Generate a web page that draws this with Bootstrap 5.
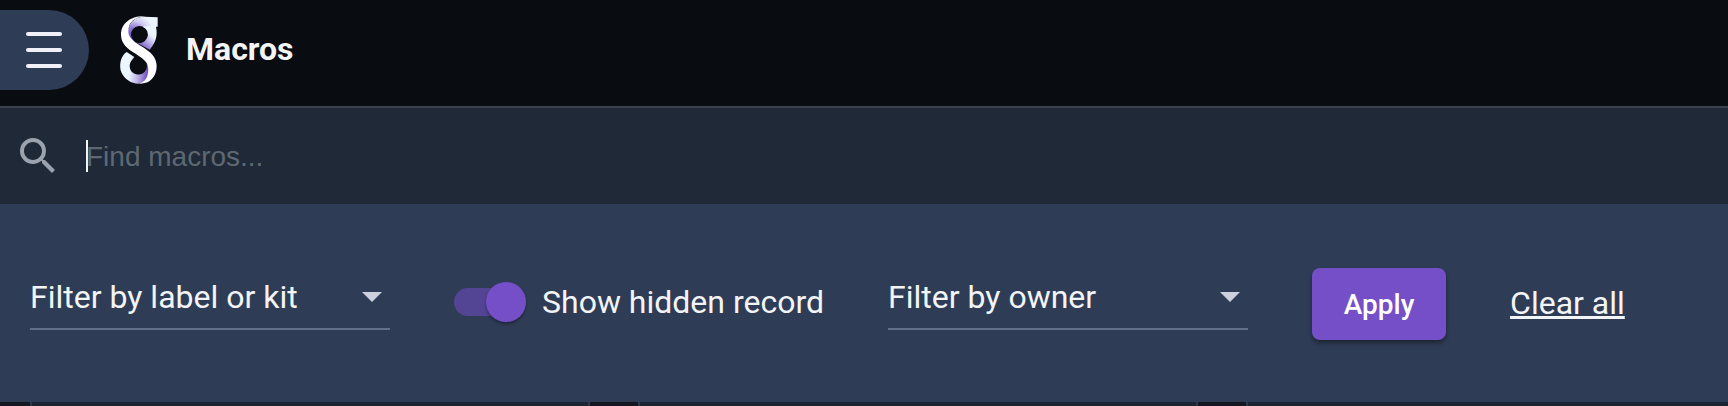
<!DOCTYPE html>
<html lang="en">
<head>
<meta charset="utf-8">
<meta name="viewport" content="width=device-width, initial-scale=1">
<title>Macros</title>
<link href="https://cdn.jsdelivr.net/npm/bootstrap@5.3.0/dist/css/bootstrap.min.css" rel="stylesheet">
<style>
  body { background: #141621; color: #f3f4f6; font-family: Roboto, sans-serif; font-size: 32px; line-height: 36px; }
  .topbar { background: #090c11; border-bottom: 2px solid #3b424c; padding: 10px 0 16px; }
  .menu-btn { width: 89px; height: 80px; padding: 0 0 0 26px; border: 0; border-radius: 0 40px 40px 0; background: #2f3c56; gap: 12px; }
  .menu-btn span { width: 36px; height: 4px; border-radius: 2px; background: #f0f1f7; }
  .logo { width: 60px; height: 80px; margin-left: 21px; }
  .page-title { font-size: 32px; line-height: 36px; font-weight: 700; margin-left: 16px; padding-bottom: 2px; }
  .searchbar { background: #1f2937; height: 96px; padding: 0 14px; gap: 24px; }
  .search-input { height: 32px; padding: 2px 0 0; border: 0; background: linear-gradient(#f3f4f6, #f3f4f6) no-repeat left / 2px 100%; color: #f3f4f6; outline: 0; font: 28px/30px "Liberation Sans", sans-serif; }
  .search-input::placeholder { color: #5e6872; opacity: 1; }
  .filters { background: #2f3c56; height: 198px; padding: 0 30px; gap: 64px; }
  .filter-select { width: 360px; height: 54px; padding: 0 0 10px; border: 0; border-bottom: 2px solid #636f8a; border-radius: 0; color: #f3f4f6; font-size: 32px; line-height: 36px;
    background: url("data:image/svg+xml,%3Csvg xmlns='http://www.w3.org/2000/svg' viewBox='0 0 20 10'%3E%3Cpath d='M0 0h20L10 10z' fill='%23cdd1de'/%3E%3C/svg%3E") no-repeat right 8px top 16px / 20px 10px; }
  .toggle { gap: 16px; padding-bottom: 2px; }
  .toggle-input { appearance: none; width: 72px; height: 28px; margin: 0; border-radius: 14px; background: #544494; display: flex; align-items: center; justify-content: flex-end; }
  .toggle-input::before { content: ""; flex: none; width: 40px; height: 40px; border-radius: 50%; background: #754fc8; box-shadow: 0 2px 3px rgba(0,0,0,.35); }
  .apply-btn { width: 134px; height: 72px; margin-top: 2px; padding: 8px 0 6px; border: 0; border-radius: 8px; background: #754fc8; color: #fff; font-size: 28px; font-weight: 500; box-shadow: 0 3px 4px rgba(0,0,0,.4); }
  .apply-btn:hover { background: #6a45bb; color: #fff; }
  .clear-link { color: #f3f4f6; }
  .results { height: 4px; padding-left: 30px; gap: 48px; }
  .macro-card { flex: 0 0 560px; background: #1a2433; border: solid #2c374e; border-width: 0 2px; }
</style>
</head>
<body>
<header class="topbar d-flex align-items-center">
  <button class="menu-btn d-flex flex-column justify-content-center" type="button" aria-label="Menu"><span></span><span></span><span></span></button>
  <svg class="logo" viewBox="0 6 180 240" aria-hidden="true">
    <defs>
      <radialGradient id="upper" gradientUnits="userSpaceOnUse" cx="66" cy="88" r="72">
        <stop offset="0" stop-color="#6f4fc0"/><stop offset=".4" stop-color="#8f78d2"/><stop offset=".7" stop-color="#cfcbf0"/><stop offset="1" stop-color="#eef7ff"/>
      </radialGradient>
      <linearGradient id="upperRight" gradientUnits="userSpaceOnUse" x1="96" y1="122" x2="128" y2="84">
        <stop offset="0" stop-color="#6f4fc0"/><stop offset=".5" stop-color="#b3a5e2"/><stop offset="1" stop-color="#ecf6ff"/>
      </linearGradient>
      <linearGradient id="lower" gradientUnits="userSpaceOnUse" x1="114" y1="190" x2="58" y2="184">
        <stop offset="0" stop-color="#6f4fc0"/><stop offset=".5" stop-color="#bcb0e6"/><stop offset="1" stop-color="#ecf6ff"/>
      </linearGradient>
    </defs>
    <path fill="url(#upper)" d="M54 98C46 56 66 26 104 26L143 28V56H138L120 72L105 60A25 25 0 1 0 72 99L76 112Z"/>
    <path fill="url(#upperRight)" d="M98 56L136 50C143 70 143 98 119 125L78 103A25 25 0 0 0 98 56Z"/>
    <path fill="url(#lower)" d="M50 132C30 145 27 175 34 193C45 218 72 231 94 226C119 221 125 180 110 167A26 26 0 1 1 66 156L73 147Z"/>
    <path fill="#fff" d="M108 25C76 21 33 37 33 80C33 136 117 138 115 184C114 210 105 222 88 227C119 228 140 207 140 174C140 118 57 113 55 72C54 45 70 27 108 25Z"/>
  </svg>
  <h1 class="page-title mb-0">Macros</h1>
</header>

<form class="searchbar d-flex align-items-center" role="search">
  <svg width="48" height="48" viewBox="0 0 24 24" fill="#9ca3af" aria-hidden="true"><path d="M15.5 14h-.79l-.28-.27A6.47 6.47 0 0 0 16 9.5 6.5 6.5 0 1 0 9.5 16c1.61 0 3.09-.59 4.23-1.57l.27.28v.79l5 4.99L20.49 19l-4.99-5zm-6 0C7.01 14 5 11.99 5 9.5S7.01 5 9.5 5 14 7.01 14 9.5 11.99 14 9.5 14z"/></svg>
  <input class="search-input flex-grow-1" type="text" placeholder="Find macros..." aria-label="Find macros">
</form>

<form class="filters d-flex align-items-center">
  <select class="filter-select form-select flex-shrink-0" aria-label="Filter by label or kit"><option>Filter by label or kit</option></select>
  <div class="toggle d-flex align-items-center flex-shrink-0">
    <input class="toggle-input" type="checkbox" role="switch" id="showHidden" checked>
    <label for="showHidden">Show hidden record</label>
  </div>
  <select class="filter-select form-select flex-shrink-0" aria-label="Filter by owner"><option>Filter by owner</option></select>
  <button class="apply-btn btn flex-shrink-0" type="button">Apply</button>
  <a class="clear-link text-nowrap" href="#">Clear all</a>
</form>

<main class="results d-flex overflow-hidden">
  <div class="macro-card"></div>
  <div class="macro-card"></div>
  <div class="macro-card"></div>
</main>
<script src="https://cdn.jsdelivr.net/npm/bootstrap@5.3.0/dist/js/bootstrap.bundle.min.js"></script>
</body>
</html>
